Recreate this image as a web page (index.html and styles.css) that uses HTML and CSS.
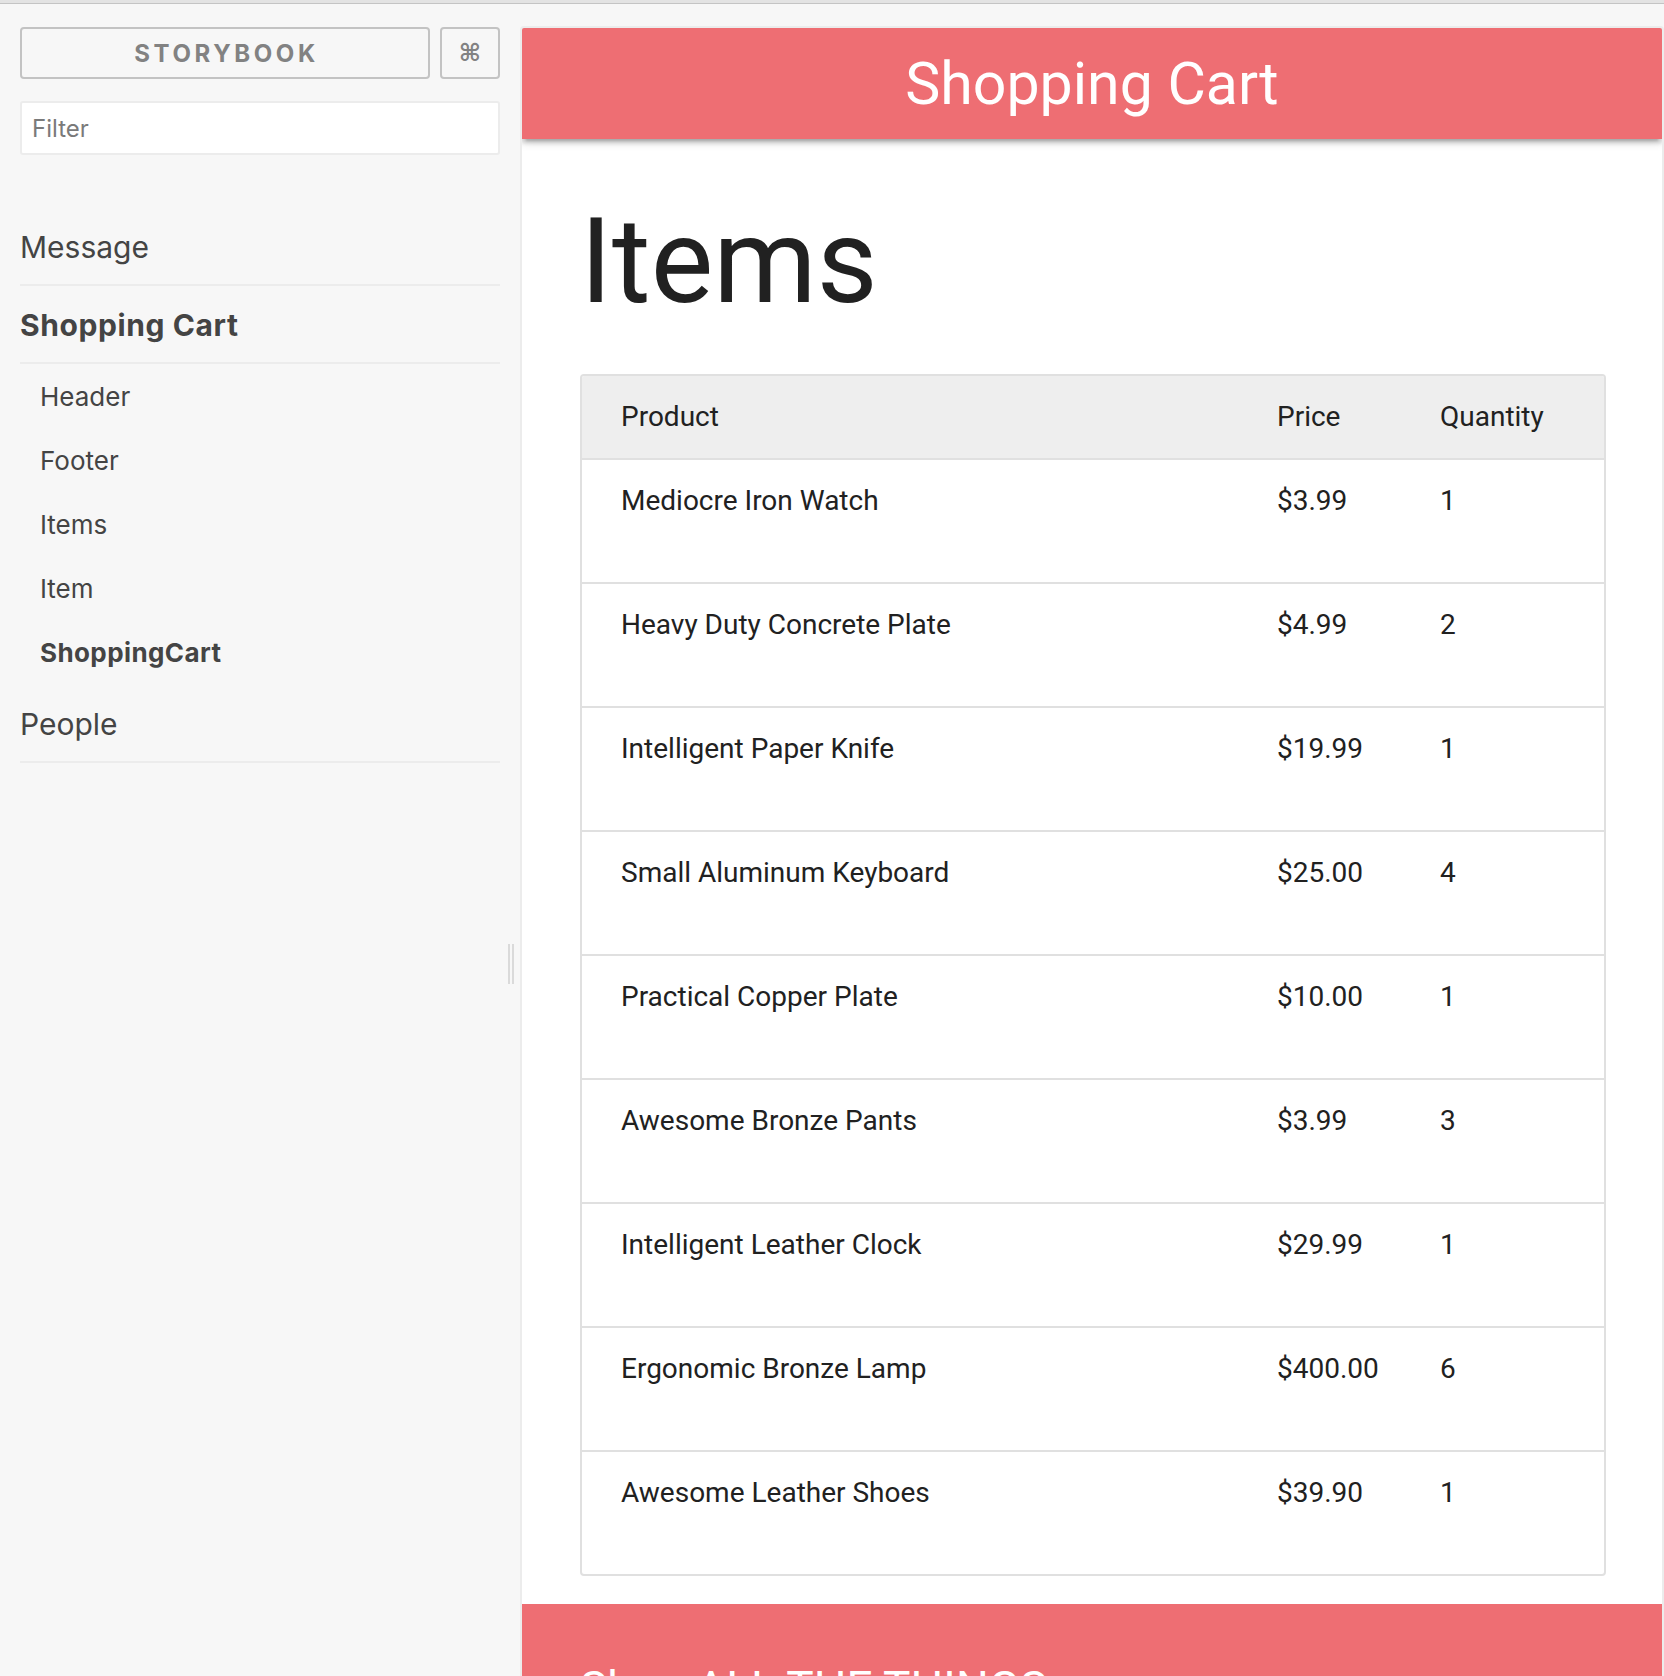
FILE: index.html
```html
<!DOCTYPE html>
<html lang="en">
<head>
<meta charset="utf-8">
<title>Storybook</title>
<link rel="stylesheet" href="styles.css">
</head>
<body>
<div class="topline"></div>
<div class="layout">
  <aside class="sidebar">
    <div class="brand-row">
      <button class="brand">STORYBOOK</button>
      <button class="shortcut">&#8984;</button>
    </div>
    <input class="filter" type="text" placeholder="Filter">
    <ul class="kinds">
      <li class="kind"><div class="kind-name">Message</div></li>
      <li class="kind">
        <div class="kind-name selected">Shopping Cart</div>
        <ul class="stories">
          <li class="story">Header</li>
          <li class="story">Footer</li>
          <li class="story">Items</li>
          <li class="story">Item</li>
          <li class="story selected">ShoppingCart</li>
        </ul>
      </li>
      <li class="kind"><div class="kind-name">People</div></li>
    </ul>
  </aside>
  <div class="resizer"><span></span><span></span></div>
  <main class="preview">
    <nav class="nav">Shopping Cart</nav>
    <section class="content">
      <h1 class="title">Items</h1>
      <div class="cart">
        <div class="cart-row cart-head">
          <div class="cell">Product</div><div class="cell">Price</div><div class="cell">Quantity</div>
        </div>
        <div class="cart-row"><div class="cell">Mediocre Iron Watch</div><div class="cell">$3.99</div><div class="cell">1</div></div>
        <div class="cart-row"><div class="cell">Heavy Duty Concrete Plate</div><div class="cell">$4.99</div><div class="cell">2</div></div>
        <div class="cart-row"><div class="cell">Intelligent Paper Knife</div><div class="cell">$19.99</div><div class="cell">1</div></div>
        <div class="cart-row"><div class="cell">Small Aluminum Keyboard</div><div class="cell">$25.00</div><div class="cell">4</div></div>
        <div class="cart-row"><div class="cell">Practical Copper Plate</div><div class="cell">$10.00</div><div class="cell">1</div></div>
        <div class="cart-row"><div class="cell">Awesome Bronze Pants</div><div class="cell">$3.99</div><div class="cell">3</div></div>
        <div class="cart-row"><div class="cell">Intelligent Leather Clock</div><div class="cell">$29.99</div><div class="cell">1</div></div>
        <div class="cart-row"><div class="cell">Ergonomic Bronze Lamp</div><div class="cell">$400.00</div><div class="cell">6</div></div>
        <div class="cart-row"><div class="cell">Awesome Leather Shoes</div><div class="cell">$39.90</div><div class="cell">1</div></div>
      </div>
    </section>
    <footer class="footer"><h5 class="footer-title">Shop ALL THE THINGS</h5></footer>
  </main>
</div>
</body>
</html>
```

FILE: styles.css
```css
* { box-sizing: border-box; }

html, body {
  margin: 0;
  height: 1676px;
  overflow: hidden;
}

body {
  background: #f7f7f7;
  font-family: Inter, "Noto Sans", sans-serif;
  color: #444;
}

.topline {
  height: 4px;
  background: #e3e3e3;
  border-bottom: 1px solid #c4c4c4;
}

.layout {
  display: flex;
  padding-top: 22px;
  height: 1672px;
}

/* ---------- sidebar ---------- */
.sidebar {
  width: 500px;
  flex: none;
  padding: 1px 0 0 20px;
}

.brand-row {
  display: flex;
  gap: 10px;
}

.brand,
.shortcut {
  height: 52px;
  border: 2px solid #c3c3c3;
  border-radius: 4px;
  background: transparent;
  color: #828282;
  padding: 0;
}

.brand {
  width: 410px;
  font: 700 24px Inter, "Noto Sans", sans-serif;
  letter-spacing: 3.6px;
  padding-left: 3px;
}

.shortcut {
  width: 60px;
  font: 700 24px "DejaVu Sans", sans-serif;
}

.filter {
  display: block;
  width: 480px;
  height: 54px;
  margin: 22px 0 0;
  border: 2px solid #ececec;
  border-radius: 3px;
  background: #fff;
  padding: 0 0 0 10px;
  font: 24px Inter, "Noto Sans", sans-serif;
  color: #444;
  outline: none;
}

.filter::placeholder { color: #7a7a7a; }

.kinds {
  list-style: none;
  margin: 53px 0 0;
  padding: 0;
}

.kind-name {
  font-size: 30px;
  line-height: 40px;
  padding: 19px 0 17px;
  border-bottom: 2px solid #ececec;
}

.kind-name.selected { letter-spacing: 0.6px; }

.stories {
  list-style: none;
  margin: 0;
  padding: 1px 0 0 20px;
}

.story {
  font-size: 26px;
  line-height: 64px;
}

.story.selected { letter-spacing: 0.4px; }

.selected { font-weight: 700; }

.resizer {
  flex: none;
  display: flex;
  gap: 2px;
  height: 40px;
  margin: 918px 6px 0 8px;
}

.resizer span {
  width: 2px;
  background: #dadada;
}

/* ---------- preview ---------- */
.preview {
  flex: 1;
  min-width: 0;
  background: #fff;
  border: 2px solid #ececec;
  border-bottom: 0;
  border-radius: 4px 4px 0 0;
  overflow: hidden;
  font-family: Roboto, sans-serif;
  color: #212121;
}

.nav {
  position: relative;
  height: 111px;
  padding-top: 21px;
  line-height: 70px;
  font-size: 59px;
  text-align: center;
  color: #fff;
  background: #ee6e73;
  box-shadow: 0 4px 4px 0 rgba(0,0,0,0.14), 0 6px 2px -4px rgba(0,0,0,0.12), 0 2px 10px 0 rgba(0,0,0,0.2);
}

.content {
  padding: 0 56px 0 58px;
}

.title {
  margin: 58px 0 47px;
  font-size: 118px;
  font-weight: 400;
  line-height: 130px;
  color: #212121;
}

.cart {
  border: 2px solid #e0e0e0;
  border-radius: 4px;
  overflow: hidden;
}

.cart-row {
  display: grid;
  grid-template-columns: 656px 163px 1fr;
  height: 124px;
  border-bottom: 2px solid #e0e0e0;
}

.cart-row:last-child {
  height: 122px;
  border-bottom: 0;
}

.cart-head {
  height: 84px;
  background: #eeeeee;
}

.cell {
  padding: 24px 0 0 39px;
  font-size: 28px;
  line-height: 34px;
  white-space: nowrap;
}

.footer {
  margin-top: 28px;
  padding: 59px 58px;
  background: #ee6e73;
  color: #fff;
}

.footer-title {
  margin: 0;
  font-size: 46px;
  font-weight: 400;
  line-height: 1.1;
}
```
